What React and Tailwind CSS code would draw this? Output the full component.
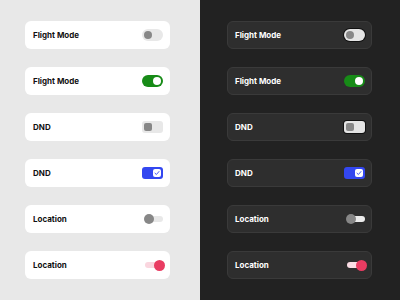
import React from "react";

function Check() {
  return (
    <svg width="6" height="6" viewBox="0 0 6 6" fill="none">
      <path d="M1 3.2 L2.4 4.5 L5 1.5" stroke="#3347f0" strokeWidth="0.9" strokeLinecap="round" strokeLinejoin="round" />
    </svg>
  );
}

function Toggle({ kind, dark }) {
  if (kind === "roundOff")
    return (
      <div className={"w-[21px] h-[12px] rounded-full flex items-center pl-[2px] " + (dark ? "bg-[#e4e4e4] ring-1 ring-[#111]" : "bg-[#e8e8e8]")}>
        <div className="w-[8px] h-[8px] rounded-full bg-[#878787]" />
      </div>
    );
  if (kind === "roundOn")
    return (
      <div className="w-[21px] h-[12px] rounded-full flex items-center justify-end pr-[2px] bg-[#178b17]">
        <div className="w-[8px] h-[8px] rounded-full bg-white" />
      </div>
    );
  if (kind === "squareOff")
    return (
      <div className={"w-[21px] h-[12px] rounded-[3px] flex items-center pl-[2px] " + (dark ? "bg-[#e4e4e4] ring-1 ring-[#111]" : "bg-[#e8e8e8]")}>
        <div className="w-[8px] h-[8px] rounded-[2px] bg-[#878787]" />
      </div>
    );
  if (kind === "squareOn")
    return (
      <div className="w-[21px] h-[12px] rounded-[3px] flex items-center justify-end pr-[2px] bg-[#3347f0]">
        <div className="w-[8px] h-[8px] rounded-[2px] bg-white flex items-center justify-center">
          <Check />
        </div>
      </div>
    );
  if (kind === "thinOff")
    return (
      <div className={"w-[18px] h-[6px] rounded-full flex items-center " + (dark ? "bg-[#ececec]" : "bg-[#e8e8e8]")}>
        <div className="w-[10px] h-[10px] rounded-full bg-[#878787] -ml-[1px] shrink-0" />
      </div>
    );
  return (
    <div className={"w-[18px] h-[6px] rounded-full flex items-center justify-end " + (dark ? "bg-[#fbdde5]" : "bg-[#fad6df]")}>
      <div className="w-[11px] h-[11px] rounded-full bg-[#e93c62] -mr-[2px] shrink-0" />
    </div>
  );
}

const rows = [
  ["Flight Mode", "roundOff"],
  ["Flight Mode", "roundOn"],
  ["DND", "squareOff"],
  ["DND", "squareOn"],
  ["Location", "thinOff"],
  ["Location", "thinOn"],
];

function Panel({ dark }) {
  return (
    <div className={"w-[200px] h-[300px] flex flex-col gap-[18px] pt-[21px] " + (dark ? "bg-[#222222] pl-[27px] pr-[28px]" : "bg-[#e8e8e8] pl-[25px] pr-[30px]")}>
      {rows.map(([label, kind], i) => (
        <div
          key={i}
          className={"h-[28px] flex items-center justify-between rounded-[6px] " + (dark ? "bg-[#2e2e2e] border border-[#3a3a3a] pl-[7px] pr-[6px]" : "bg-white pl-2 pr-[7px]")}
        >
          <span className={"text-[8px] font-bold leading-none " + (dark ? "text-white" : "text-[#111]")}>{label}</span>
          <Toggle kind={kind} dark={dark} />
        </div>
      ))}
    </div>
  );
}

export default function App() {
  return (
    <div className="flex w-[400px] h-[300px]" style={{ fontFamily: "Inter, 'Noto Sans', sans-serif" }}>
      <Panel dark={false} />
      <Panel dark={true} />
    </div>
  );
}
